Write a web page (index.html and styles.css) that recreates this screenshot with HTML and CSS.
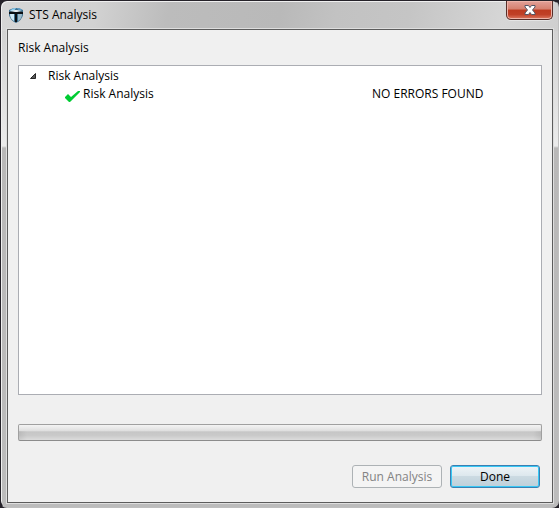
FILE: index.html
```html
<!DOCTYPE html>
<html lang="en">
<head>
<meta charset="utf-8">
<title>STS Analysis</title>
<link rel="stylesheet" href="styles.css">
</head>
<body>
<main class="window">
  <header class="titlebar">
    <svg class="app-icon" viewBox="0 0 16 16" aria-hidden="true">
      <path d="M1 3Q8-1 15 3V8Q14 13 8 16Q2 13 1 8Z" fill="#3f718f"/>
      <path d="M2 4Q4 1 8 1L6 4Z" fill="#8ed0f4"/>
      <path d="M9 1Q13 1 14 3L11 4Z" fill="#5a9cc8"/>
      <path d="M1 5Q8 3 15 5V7L9 7V15H7V7L1 7Z" fill="#0b1015"/>
      <path d="M2 7H6V14Q2 12 2 7Z" fill="#d0eaf7"/>
      <path d="M10 7H14Q14 12 10 14Z" fill="#9dbccd"/>
      <path d="M2 4L7 3H9L14 4L9 5H7Z" fill="#e4edf2"/>
    </svg>
    <h1 class="title">STS Analysis</h1>
    <button class="close" type="button" aria-label="Close">
      <svg class="close-icon" viewBox="0 0 12 10" aria-hidden="true">
        <path d="M1 .5H4.500L6 2.500L7.500 .5H11V2L8.500 5L11 8V9.500H7.500L6 7.500L4.500 9.500H1V8L3.500 5L1 2Z" fill="#fff" stroke="#535666"/>
      </svg>
    </button>
  </header>
  <section class="client">
    <h2 class="heading" id="tree-label">Risk Analysis</h2>
    <div class="tree" role="tree" aria-labelledby="tree-label">
      <div class="row" role="treeitem" aria-expanded="true">
        <svg class="arrow" viewBox="0 0 6 6" aria-hidden="true"><path d="M5.500 .5V5.500H.5Z" fill="#595959" stroke="#262626"/></svg>
        <span>Risk Analysis</span>
      </div>
      <div class="row child" role="treeitem">
        <span class="item">
          <svg class="check" viewBox="0 0 16 12" aria-hidden="true"><path d="M0 6L3 3L6 6L13 0H15V1L6 10L5 11H4L0 7Z" fill="#00cc33"/></svg>
          <span>Risk Analysis</span>
        </span>
        <span class="result">NO ERRORS FOUND</span>
      </div>
    </div>
    <div class="progress" role="progressbar" aria-label="Analysis progress"></div>
    <footer class="actions">
      <button class="button" type="button" disabled>Run Analysis</button>
      <button class="button primary" type="button">Done</button>
    </footer>
  </section>
</main>
</body>
</html>
```
FILE: styles.css
```css
* { box-sizing: border-box; }

body {
  margin: 0;
  background: #252229;
  color: #000;
  font: 12px/18px "Open Sans", "Noto Sans", sans-serif;
}

.window {
  display: flex;
  flex-direction: column;
  min-height: 100vh;
  padding: 0 5px 4px;
  border: 1px solid #bfbfbf;
  border-top-color: #252229;
  border-left-color: #252229;
  border-radius: 7px;
  background:
    linear-gradient(100deg, #d6d6d6, #d2d2d2 17%, #bcbcbc 30%, #b9b9b9 50%, #c2c2c2 60%, #c5c5c5 73%, #d6d6d6 90%, #cfcfcf) top / 100% 30px no-repeat,
    linear-gradient(#cfcfcf, #d2d2d2 30px, #ebebeb 145px, #b9b8b8 147px, #bcbcbc);
  box-shadow: inset 1px 1px #efefef;
}

.titlebar {
  display: flex;
  align-items: flex-start;
  height: 28px;
  padding-left: 2px;
}

.app-icon {
  width: 16px;
  height: 16px;
  margin-top: 6px;
}

.title {
  flex: 1;
  margin: 5px 0 0 5px;
  font-size: 12px;
  font-weight: 400;
}

.close {
  display: flex;
  align-items: center;
  justify-content: center;
  width: 47px;
  height: 19px;
  padding: 0;
  border: 1px solid #572e29;
  border-top: 0;
  border-radius: 0 0 5px 5px;
  background: linear-gradient(#e2a199, #d5806f 45%, #bd3a20 50%, #c04027 75%, #dc7860);
  box-shadow: inset 0 0 0 1px #eeb4a9, 0 1px #e5e5e5;
}

.close-icon {
  width: 12px;
  height: 10px;
}

.client {
  display: flex;
  flex: 1;
  flex-direction: column;
  margin-left: 1px;
  padding: 9px 10px 14px;
  border: 1px solid #5c5c5c;
  background: #f0f0f0;
  box-shadow: 0 0 0 1px #dedede;
}

.heading {
  margin: 0 0 8px;
  font-size: 12px;
  font-weight: 400;
}

.tree {
  flex: 1;
  padding-top: 1px;
  border: 1px solid #abadb3;
  background: #fff;
}

.row {
  display: flex;
  align-items: center;
  height: 18px;
  padding-left: 11px;
}

.arrow {
  width: 6px;
  height: 6px;
  margin-right: 12px;
}

.child { padding-left: 46px; }

.item {
  display: flex;
  align-items: center;
  width: 307px;
}

.check {
  width: 16px;
  height: 12px;
  margin: 5px 2px 0 0;
}

.progress {
  height: 17px;
  margin: 29px 0 24px;
  border: 1px solid #a0a0a0;
  border-bottom-color: #8c8c8c;
  border-radius: 2px;
  background:
    linear-gradient(90deg, #0001, #0000 8px calc(100% - 8px), #0001) bottom / 100% 60% no-repeat,
    linear-gradient(#f4f4f4, #dedede 40%, #c6c6c6 45%, #cacaca 70%, #dcdcdc);
}

.actions {
  display: flex;
  justify-content: flex-end;
  gap: 8px;
  padding-right: 2px;
}

.button {
  width: 90px;
  height: 23px;
  padding: 0;
  border: 1px solid #adb2b5;
  border-radius: 3px;
  background: #f4f4f4;
  color: #838383;
  font: inherit;
}

.primary {
  border-color: #3c7fb1;
  background: linear-gradient(#eef4f7, #dce7ed 49%, #cbdae2 50%, #bed0da);
  box-shadow: inset 0 0 0 1px #37c8f5;
  color: #000;
}
```
